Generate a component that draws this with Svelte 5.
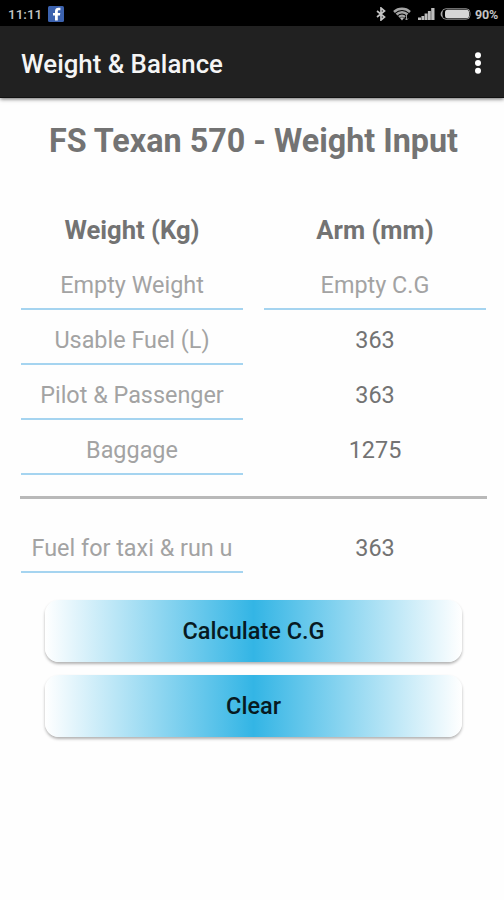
<script>
    let rows = $state([
        { hint: "Empty Weight", weight: "", arm: "" },
        { hint: "Usable Fuel (L)", weight: "", arm: "363" },
        { hint: "Pilot & Passenger", weight: "", arm: "363" },
        { hint: "Baggage", weight: "", arm: "1275" },
    ]);

    let emptyArm = $state("");
    let taxiFuel = $state("");

    function clear() {
        for (const row of rows) row.weight = "";
        emptyArm = "";
        taxiFuel = "";
    }
</script>

<div class="screen">
    <div class="status">
        <span class="time">11:11</span>
        <svg class="facebook" width="16" height="16" viewBox="0 0 16 16">
            <rect width="16" height="16" rx="1.5" fill="#3c62ae" />
            <path d="M7 14.500V9.600H5V7h2V5.200C7 2.900 8.400 1.800 10.400 1.800h2v2.500h-1.300c-1 0-1.300.5-1.300 1.200V7h2.500l-.4 2.600H9.800v4.900z" fill="#fff" />
        </svg>
        <div class="indicators">
            <svg class="bluetooth" width="10" height="14" viewBox="0 0 10 14">
                <path d="M1 4l7.500 6L5 13V1l3.500 3L1 10" fill="none" stroke="#c4c4c4" stroke-width="1.700" />
            </svg>
            <svg class="wifi" width="18" height="14" viewBox="0 0 18 14">
                <path d="M1 5C5.500.8 12.500.8 17 5M3.500 7.500c3-3 8-3 11 0M6 10c1.700-1.700 4.300-1.700 6 0" fill="none" stroke="#a5a5a5" stroke-width="2.500" />
                <path d="M7 11q2-1.700 4 0l-2 2.500z" fill="#bbb" />
                <path d="M13.500 8v5M12 11.500l1.500 1.500 1.500-1.500" fill="none" stroke="#999" />
            </svg>
            <svg class="signal" width="17" height="12" viewBox="0 0 17 12">
                <path d="M0 9.500h3V12H0zM3.400 8h2.800v4H3.400zM6.600 5.500h2.900V12H6.600zM9.900 3h2.900v9H9.900zM13.200 0h3.300v12h-3.300z" fill="#bdbdbd" />
            </svg>
            <svg class="battery" width="31" height="12" viewBox="0 0 31 12">
                <rect x="2" y=".7" width="28" height="10.600" rx="4" fill="none" stroke="#888" />
                <path d="M2 3.500Q.5 6 2 8.500" fill="none" stroke="#aaa" stroke-width="1.300" />
                <rect x="5" y="1.700" width="24" height="8.600" rx="2.500" fill="#d6d6d6" />
            </svg>
            <span class="percent">90%</span>
        </div>
    </div>

    <header>
        <h1>Weight &amp; Balance</h1>
        <button class="menu" aria-label="More options">
            <svg width="8" height="24" viewBox="0 0 8 24">
                <circle cx="4" cy="4.200" r="3" />
                <circle cx="4" cy="12" r="3" />
                <circle cx="4" cy="19.800" r="3" />
            </svg>
        </button>
    </header>

    <main>
        <h2>FS Texan 570 - Weight Input</h2>

        <div class="grid heads">
            <b>Weight (Kg)</b>
            <b>Arm (mm)</b>
        </div>

        {#each rows as row}
            <div class="grid">
                <input placeholder={row.hint} bind:value={row.weight} />
                {#if row.arm}
                    <span>{row.arm}</span>
                {:else}
                    <input placeholder="Empty C.G" bind:value={emptyArm} />
                {/if}
            </div>
        {/each}

        <hr />

        <div class="grid">
            <input placeholder="Fuel for taxi & run u" bind:value={taxiFuel} />
            <span>363</span>
        </div>

        <div class="actions">
            <button>Calculate C.G</button>
            <button onclick={clear}>Clear</button>
        </div>
    </main>
</div>

<style>
    :global(body) {
        background: #fefefe;
    }

    .screen {
        height: 900px;
        overflow: hidden;
        font-family: Roboto, sans-serif;
        color: #737373;
    }

    .status {
        box-sizing: border-box;
        height: 26px;
        padding: 2px 6px 0 8px;
        display: flex;
        align-items: center;
        background: #000;
        color: #c4c4c4;
        font-size: 13.5px;
    }

    .time {
        width: 40px;
        font-weight: 500;
    }

    .indicators {
        margin-left: auto;
        display: flex;
        align-items: center;
    }

    .wifi {
        margin-left: 7px;
    }

    .signal {
        margin-left: 7px;
    }

    .battery {
        margin-left: 5px;
    }

    .percent {
        margin-left: 4px;
        font-size: 12.5px;
        font-weight: 700;
        letter-spacing: -0.2px;
    }

    header {
        height: 72px;
        box-sizing: border-box;
        padding: 2px 22px 0 21px;
        display: flex;
        align-items: center;
        justify-content: space-between;
        background: #212121;
        border-bottom: 1px solid #111;
        box-shadow: 0 1px 4px rgba(0, 0, 0, 0.6);
    }

    h1 {
        margin: 0;
        padding-top: 3px;
        color: #f5f5f5;
        font-size: 25.8px;
        font-weight: 500;
    }

    .menu {
        padding: 0;
        border: 0;
        background: none;
        display: flex;
    }

    .menu svg {
        fill: #fff;
    }

    main {
        padding: 0 18px 0 21px;
    }

    h2 {
        margin: 0;
        padding-top: 22px;
        height: 85px;
        line-height: 42px;
        font-size: 32.3px;
        font-weight: 700;
        text-align: center;
        white-space: nowrap;
    }

    .grid {
        display: grid;
        grid-template-columns: 222px 222px;
        column-gap: 21px;
        height: 55px;
        font-size: 23.4px;
        text-align: center;
    }

    .grid span {
        line-height: 59px;
    }

    .heads {
        height: 51px;
        font-size: 25.6px;
        line-height: 51px;
    }

    input {
        box-sizing: border-box;
        width: 100%;
        height: 54px;
        margin: 0;
        padding: 6px 0 0;
        border: 0;
        border-bottom: 2px solid #a5d4f0;
        outline: none;
        background: none;
        color: #737373;
        font: inherit;
        text-align: center;
    }

    input::placeholder {
        color: #a3a3a3;
        opacity: 1;
    }

    hr {
        height: 3px;
        margin: 20px -1px;
        border: 0;
        background: #b9b9b9;
    }

    .actions {
        display: flex;
        flex-direction: column;
        gap: 13px;
        margin: 26px 24px 0;
    }

    .actions button {
        height: 62px;
        padding: 0;
        border: 0;
        border-radius: 14px;
        background: linear-gradient(90deg, #fff, #33b5e5 50%, #fff);
        box-shadow: 0 2px 3px rgba(0, 0, 0, 0.3);
        color: #071a22;
        font: 500 23.5px Roboto, sans-serif;
    }
</style>
